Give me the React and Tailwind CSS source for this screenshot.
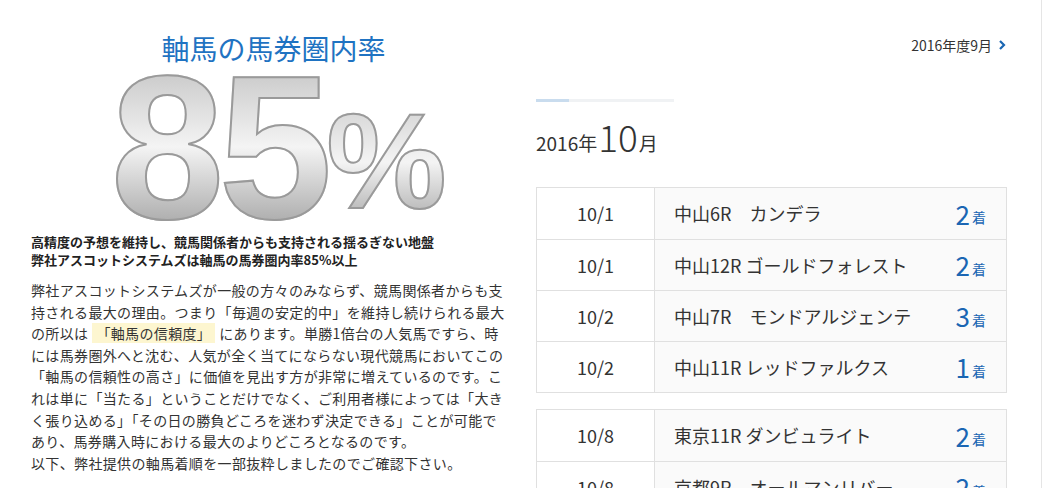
export default function App() {
  const rows1 = [
    ["10/1", "中山6R\u3000カンデラ", "2"],
    ["10/1", "中山12R ゴールドフォレスト", "2"],
    ["10/2", "中山7R\u3000モンドアルジェンテ", "3"],
    ["10/2", "中山11R レッドファルクス", "1"],
  ];
  const rows2 = [
    ["10/8", "東京11R ダンビュライト", "2"],
    ["10/8", "京都9R\u3000オールマンリバー", "2"],
  ];
  const Table = ({ rows }) => (
    <div className="border border-[#e0e0e0]">
      {rows.map((r, i) => (
        <div key={i} className={`flex h-[51px] ${i ? "border-t border-[#e0e0e0]" : ""}`}>
          <div className="w-[118px] flex items-center justify-center text-[18px] text-[#333] border-r border-[#e0e0e0] bg-white">{r[0]}</div>
          <div className="flex-1 flex items-center bg-[#fafafa] pl-[19px] pr-[20px] text-[18px] text-[#333]">
            <span className="flex-1 whitespace-pre">{r[1]}</span>
            <span className="text-[26px] text-[#1a66b3] leading-none">{r[2]}</span>
            <span className="text-[14px] text-[#1a66b3] ml-[2px] mt-[8px]">着</span>
          </div>
        </div>
      ))}
    </div>
  );
  return (
    <div className="w-[1047px] h-[488px] overflow-hidden bg-white flex" style={{ fontFamily: '"Noto Sans CJK JP", "Noto Sans", sans-serif' }}>
      <div className="w-[1042px] border-r border-[#e5e5e5] flex pt-[34px]">
        <div className="w-[475px] ml-[31px]">
          <div className="text-center text-[28px] text-[#1f73c2] leading-none ml-[10px]" style={{ fontFamily: '"Noto Sans CJK JP", serif' }}>軸馬の馬券圏内率</div>
          <div className="h-[165px] flex items-end justify-center ml-[20px] relative">
            <span className="text-[205px] leading-[160px] font-bold tracking-[-6px] bg-gradient-to-b from-[#c8c8c8] via-[#f4f4f4] to-[#a9a9a9] bg-clip-text text-transparent" style={{ WebkitTextStroke: "2px #9a9a9a", fontFamily: '"Liberation Sans", sans-serif' }}>85</span>
            <span className="text-[135px] leading-[130px] font-bold bg-gradient-to-b from-[#d0d0d0] via-[#f4f4f4] to-[#a9a9a9] bg-clip-text text-transparent" style={{ WebkitTextStroke: "2px #9a9a9a", fontFamily: '"Liberation Sans", sans-serif' }}>%</span>
          </div>
          <div className="mt-[6px] text-[13px] font-bold text-[#222] leading-[18px]">
            <p>高精度の予想を維持し、競馬関係者からも支持される揺るぎない地盤</p>
            <p>弊社アスコットシステムズは軸馬の馬券圏内率85%以上</p>
          </div>
          <p className="mt-[11px] text-[14px] tracking-[0.35px] text-[#333] leading-[21.6px]">
            弊社アスコットシステムズが一般の方々のみならず、競馬関係者からも支持される最大の理由。つまり「毎週の安定的中」を維持し続けられる最大の所以は<span className="bg-[#fdf6d0] px-[4px] mx-[4px]">「軸馬の信頼度」</span>にあります。単勝1倍台の人気馬ですら、時には馬券圏外へと沈む、人気が全く当てにならない現代競馬においてこの「軸馬の信頼性の高さ」に価値を見出す方が非常に増えているのです。これは単に「当たる」ということだけでなく、ご利用者様によっては「大きく張り込める」「その日の勝負どころを迷わず決定できる」ことが可能であり、馬券購入時における最大のよりどころとなるのです。
            <br />以下、弊社提供の軸馬着順を一部抜粋しましたのでご確認下さい。
          </p>
        </div>
        <div className="ml-[30px] w-[471px] -mt-[4px]">
          <div className="flex justify-end items-center text-[14px] text-[#333] mt-[5px] h-[20px]">
            2016年度9月
            <svg width="10" height="12" viewBox="0 0 10 12" className="ml-[5px]"><path d="M3 2l4 4-4 4" stroke="#1a66b3" strokeWidth="2.2" fill="none" /></svg>
          </div>
          <div className="mt-[44px] w-[138px] h-[3px] bg-[#f0f2f4]"><div className="w-[33px] h-[3px] bg-[#c9dcee]" /></div>
          <div className="mt-[13px] flex items-end text-[#333] h-[40px]">
            <span className="text-[19px] leading-none mb-[3px]">2016年</span>
            <span className="text-[37px] font-light leading-none mx-[1px]">10</span>
            <span className="text-[19px] leading-none mb-[3px]">月</span>
          </div>
          <div className="mt-[32px]"><Table rows={rows1} /></div>
          <div className="mt-[16px]"><Table rows={rows2} /></div>
        </div>
      </div>
    </div>
  );
}
